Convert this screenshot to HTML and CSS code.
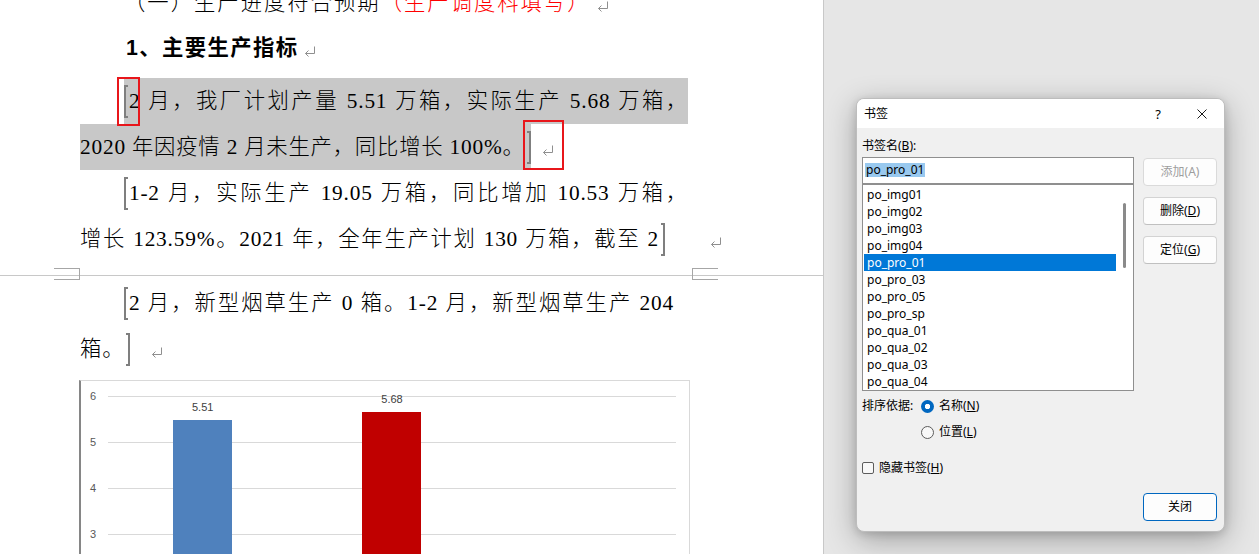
FILE: index.html
```html
<!DOCTYPE html>
<html lang="zh-CN">
<head>
<meta charset="utf-8">
<title>书签</title>
<link rel="stylesheet" href="styles.css">
</head>
<body>
<main class="page">
  <div class="doc">
    <p class="line h2"><span class="t">（一）生产进度符合预期<span class="red">（生产调度科填写）</span></span><svg class="ret m6" width="12" height="11" viewBox="0 0 12 11"><path d="M10.5 0.5V7.5H1.5M4.5 4.5L1.5 7.5L4.5 10.5" fill="none" stroke="#8f8f8f"/></svg></p>
    <p class="line h3"><span class="t">1、主要生产指标</span><svg class="ret m6" width="12" height="11" viewBox="0 0 12 11"><path d="M10.5 0.5V7.5H1.5M4.5 4.5L1.5 7.5L4.5 10.5" fill="none" stroke="#8f8f8f"/></svg></p>
    <p class="line ind p1"><span class="t hl just w564"><span class="bm bo"></span>2 月，我厂计划产量 5.51 万箱，实际生产 5.68 万箱，</span></p>
    <p class="line"><span class="t hl">2020 年因疫情 2 月未生产，同比增长 100%。<span class="bm bc"></span></span><svg class="ret m11" width="12" height="11" viewBox="0 0 12 11"><path d="M10.5 0.5V7.5H1.5M4.5 4.5L1.5 7.5L4.5 10.5" fill="none" stroke="#8f8f8f"/></svg></p>
    <p class="line ind"><span class="t just w564"><span class="bm bo"></span>1-2 月，实际生产 19.05 万箱，同比增加 10.53 万箱，</span></p>
    <p class="line"><span class="t just w585">增长 123.59%。2021 年，全年生产计划 130 万箱，截至 2<span class="bm bc"></span></span><svg class="ret m45" width="12" height="11" viewBox="0 0 12 11"><path d="M10.5 0.5V7.5H1.5M4.5 4.5L1.5 7.5L4.5 10.5" fill="none" stroke="#8f8f8f"/></svg></p>
    <div class="pbreak"><span class="cm cm-l"></span><span class="cm cm-r"></span></div>
    <p class="line ind"><span class="t just w550"><span class="bm bo"></span>2 月，新型烟草生产 0 箱。1-2 月，新型烟草生产 204</span></p>
    <p class="line"><span class="t">箱。<span class="bm bc"></span></span><svg class="ret m21" width="12" height="11" viewBox="0 0 12 11"><path d="M10.5 0.5V7.5H1.5M4.5 4.5L1.5 7.5L4.5 10.5" fill="none" stroke="#8f8f8f"/></svg></p>
    <div class="chart">
      <div class="yaxis"><div>6</div><div>5</div><div>4</div><div>3</div><div>2</div><div>1</div><div>0</div></div>
      <div class="plot">
        <div class="cat"><span class="val">5.51</span><span class="bar blue" style="height:253.5px"></span></div>
        <div class="cat"><span class="val">5.68</span><span class="bar dred" style="height:261.3px"></span></div>
        <div class="cat"></div>
      </div>
    </div>
  </div>
  <span class="callout c1"></span>
  <span class="callout c2"></span>
</main>
<div class="appbg"></div>

<section class="dlg">
  <header class="dlg-title">
    <span class="dlg-name">书签</span>
    <span class="tb-btn help">?</span>
    <span class="tb-btn"><svg width="10" height="10" viewBox="0 0 10 10"><path d="M0.5 0.5L9.5 9.5M9.5 0.5L0.5 9.5" fill="none" stroke="#1a1a1a" stroke-width="1"/></svg></span>
  </header>
  <div class="dlg-body">
    <div class="top">
      <div class="left">
        <div class="lbl">书签名(<u>B</u>):</div>
        <div class="input"><span class="sel">po_pro_01</span></div>
        <div class="list">
          <ul class="items">
            <li>po_img01</li>
            <li>po_img02</li>
            <li>po_img03</li>
            <li>po_img04</li>
            <li class="on">po_pro_01</li>
            <li>po_pro_03</li>
            <li>po_pro_05</li>
            <li>po_pro_sp</li>
            <li>po_qua_01</li>
            <li>po_qua_02</li>
            <li>po_qua_03</li>
            <li>po_qua_04</li>
          </ul>
          <div class="sb"><div class="thumb"></div></div>
        </div>
      </div>
      <div class="btns">
        <div class="btn disabled">添加(A)</div>
        <div class="btn"><span>删除(<u>D</u>)</span></div>
        <div class="btn"><span>定位(<u>G</u>)</span></div>
      </div>
    </div>
    <div class="sort">
      <span class="sort-lbl">排序依据:</span>
      <div class="radios">
        <div class="radio"><span class="rb on"></span><span>名称(<u>N</u>)</span></div>
        <div class="radio"><span class="rb"></span><span>位置(<u>L</u>)</span></div>
      </div>
    </div>
    <div class="check"><span class="cb"></span><span>隐藏书签(<u>H</u>)</span></div>
    <div class="foot"><div class="btn primary">关闭</div></div>
  </div>
</section>
</body>
</html>
```
FILE: styles.css
```css
* { box-sizing: border-box; }
html, body { margin: 0; padding: 0; }
body {
  width: 1259px;
  height: 554px;
  overflow: hidden;
  display: flex;
  position: relative;
  background: #e6e6e6;
}
.page {
  flex: none;
  width: 824px;
  height: 554px;
  background: #fff;
  border-right: 1px solid #c8c8c8;
  position: relative;
  overflow: hidden;
}
.appbg { flex: 1; }

/* document */
.doc {
  padding-left: 80px;
  font-family: "Liberation Serif", "Noto Sans CJK SC", serif;
  font-size: 21.33px;
  font-weight: 300;
  letter-spacing: 0.8px;
  color: #000;
  text-autospace: no-autospace;
  text-spacing-trim: space-all;
}
.line {
  display: flex;
  align-items: center;
  height: 46px;
  line-height: 46px;
  margin: 0;
}
.ind { padding-left: 44px; }
.t { flex: none; }
.just { text-align: justify; text-align-last: justify; }
.w564 { width: 564px; }
.w585 { width: 585px; }
.w550 { width: 550px; }
.hl { background: #c8c8c8; }
.red { color: #ff0000; }

.h2 {
  height: 40px;
  line-height: 40px;
  margin-top: -17px;
  padding-left: 44px;
  letter-spacing: 2px;
}
.h3 {
  margin-top: 2px;
  padding-left: 46px;
  font-family: "Liberation Sans", "Noto Sans CJK SC", sans-serif;
  font-weight: 700;
  letter-spacing: 1.4px;
}
.p1 { margin-top: 7px; }

.ret { flex: none; margin-top: 6px; }
.m6 { margin-left: 6px; }
.m11 { margin-left: 11px; }
.m21 { margin-left: 21px; }
.m45 { margin-left: 45px; }

.bm {
  display: inline-block;
  width: 4px;
  height: 33px;
  vertical-align: -10px;
  border: 2px solid #7f7f7f;
}
.bo { border-right: 0; margin-right: 1px; }
.bc { border-left: 0; margin-left: 2px; }

.pbreak {
  display: flex;
  align-items: flex-start;
  height: 18px;
  width: 823px;
  margin-left: -80px;
  padding-top: 6px;
  background: linear-gradient(#c8c8c8, #c8c8c8) 0 13px / 100% 1px no-repeat;
}
.cm {
  width: 26px;
  height: 12px;
  border: 1px solid #a6a6a6;
}
.cm-l { margin-left: 54px; border-left: 0; }
.cm-r { margin-left: 612px; border-right: 0; }

/* chart */
.chart {
  display: flex;
  margin: 8px 0 0 -1px;
  width: 611px;
  height: 320px;
  padding-top: 15px;
  border-left: 2px solid #868686;
  border-top: 1px solid #d9d9d9;
  border-right: 1px solid #d9d9d9;
  font-family: "Liberation Sans", sans-serif;
  font-size: 11px;
  font-weight: 400;
  letter-spacing: 0;
}
.yaxis {
  width: 27px;
  margin-top: -7px;
  padding-right: 12px;
  text-align: right;
  color: #595959;
}
.yaxis div { height: 46px; line-height: 14px; }
.plot {
  width: 568px;
  height: 277px;
  display: flex;
  align-items: flex-end;
  background: repeating-linear-gradient(to bottom, #d9d9d9 0 1px, transparent 1px 46px);
}
.cat {
  width: 189.33px;
  display: flex;
  flex-direction: column;
  align-items: center;
}
.val { line-height: 14px; margin-bottom: 6px; color: #404040; }
.bar { display: block; width: 59px; }
.blue { background: #4f81bd; }
.dred { background: #c00000; }

.callout {
  position: absolute;
  border: 2px solid #e8161b;
}
.c1 { left: 117px; top: 77px; width: 23px; height: 49px; }
.c2 { left: 523px; top: 120px; width: 41px; height: 50px; }

/* dialog */
.dlg {
  position: absolute;
  left: 856px;
  top: 98px;
  width: 369px;
  height: 434px;
  border: 1px solid #bdbdbd;
  border-radius: 8px;
  background: #f0f0f0;
  box-shadow: 0 8px 30px rgba(0, 0, 0, 0.3), 0 2px 8px rgba(0, 0, 0, 0.14);
  overflow: hidden;
  display: flex;
  flex-direction: column;
  font-family: "Noto Sans", "Noto Sans CJK SC", sans-serif;
  font-size: 12px;
  color: #000;
}
.dlg u { text-underline-offset: 1px; }
.dlg-title {
  flex: none;
  height: 29px;
  background: #fff;
  display: flex;
  align-items: center;
  padding-left: 7px;
}
.dlg-name { flex: 1; line-height: 16px; }
.tb-btn {
  width: 44px;
  height: 29px;
  display: flex;
  align-items: center;
  justify-content: center;
}
.help { font-size: 13px; }
.dlg-body {
  flex: 1;
  padding: 9px 7px 0 5px;
}
.top {
  display: grid;
  grid-template-columns: 272px 74px;
  column-gap: 9px;
}
.lbl { height: 18px; line-height: 18px; margin-bottom: 2px; }
.input {
  height: 27px;
  background: #fff;
  border: 1px solid #8f8f8f;
  padding: 5px 0 0 2px;
  line-height: 14px;
}
.sel {
  display: inline-block;
  background: #99c9ef;
  line-height: 14px;
  padding: 0 1px;
}
.list {
  display: flex;
  height: 207px;
  background: #fff;
  border: 1px solid #8f8f8f;
}
.items {
  width: 253px;
  margin: 0;
  padding: 1px 0 0;
  list-style: none;
}
.items li {
  height: 17px;
  line-height: 17px;
  margin-left: 1px;
  padding-left: 3px;
  white-space: nowrap;
}
.items li.on { background: #0078d7; color: #fff; }
.sb { flex: 1; padding: 18px 0 0 7px; }
.thumb { width: 3px; height: 65px; border-radius: 2px; background: #8a8a8a; }

.btns {
  display: flex;
  flex-direction: column;
  gap: 11px;
  padding-top: 21px;
}
.btn {
  height: 28px;
  border: 1px solid #d3d3d3;
  border-bottom-color: #c0c0c0;
  border-radius: 4px;
  background: #fdfdfd;
  display: flex;
  align-items: center;
  justify-content: center;
  line-height: 16px;
}
.btn.disabled { color: #9d9d9d; border-color: #dadada; }
.btn.primary { width: 74px; border-color: #0067c0; }

.sort { display: flex; margin-top: 6px; line-height: 18px; }
.sort-lbl { width: 59px; }
.radios { display: flex; flex-direction: column; gap: 8px; }
.radio { display: flex; align-items: center; gap: 5px; height: 18px; }
.rb {
  flex: none;
  width: 13px;
  height: 13px;
  border-radius: 50%;
  border: 1px solid #5c5c5c;
  background: #f8f8f8;
}
.rb.on {
  border: 0;
  background: radial-gradient(circle, #fff 0 2.4px, #0067c0 3px);
}
.check {
  display: flex;
  align-items: center;
  gap: 5px;
  height: 18px;
  margin-top: 18px;
  line-height: 18px;
}
.cb {
  flex: none;
  width: 12px;
  height: 12px;
  border: 1px solid #5c5c5c;
  border-radius: 2px;
  background: #f8f8f8;
}
.foot { display: flex; justify-content: flex-end; margin-top: 16px; }
```
